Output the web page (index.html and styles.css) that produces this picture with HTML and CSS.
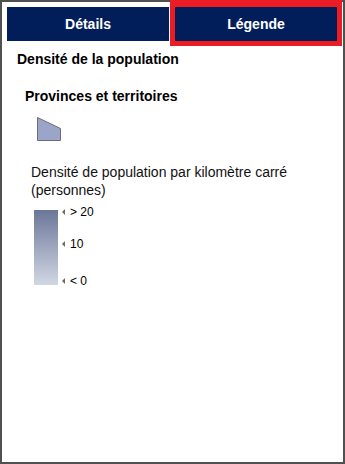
FILE: index.html
```html
<!DOCTYPE html>
<html lang="fr">
<head>
<meta charset="utf-8">
<link rel="stylesheet" href="styles.css">
</head>
<body>
<div class="frame">
  <div class="tabs">
    <div class="tab">Détails</div>
    <div class="tab active">Légende</div>
  </div>
  <div class="content">
    <h1 class="title">Densité de la population</h1>
    <div class="layer">
      <h2 class="layer-name">Provinces et territoires</h2>
      <svg class="swatch" width="24" height="24" viewBox="0 0 24 24">
        <polygon points="0.5,0.5 23.5,11.5 23.5,23.5 0.5,23.5" fill="#9aa5c9" stroke="#6e6e6e" stroke-width="1"/>
      </svg>
      <p class="desc">Densité de population par kilomètre carré (personnes)</p>
      <div class="scale">
        <div class="ramp"></div>
        <div class="ticks">
          <div class="tick t1"><span class="arrow"></span><span class="lbl">&gt; 20</span></div>
          <div class="tick t2"><span class="arrow"></span><span class="lbl">10</span></div>
          <div class="tick t3"><span class="arrow"></span><span class="lbl">&lt; 0</span></div>
        </div>
      </div>
    </div>
  </div>
</div>
</body>
</html>
```

FILE: styles.css
```css
html, body {
  margin: 0;
  padding: 0;
  background: #ffffff;
}
body {
  font-family: "Liberation Sans", Arial, sans-serif;
  color: #000;
}
.frame {
  width: 345px;
  height: 464px;
  box-sizing: border-box;
  border: 2px solid #505050;
  padding: 5px 6px 0 5px;
  background: #fff;
}
.tabs {
  display: flex;
  gap: 6px;
}
.tab {
  flex: 1;
  height: 34px;
  line-height: 34px;
  background: #021e5a;
  color: #fff;
  font-weight: bold;
  font-size: 14px;
  text-align: center;
}
.tab.active {
  box-shadow: 0 0 0 5px #ec1c24, 0 -2px 0 5px #ec1c24;
}
.content {
  padding-left: 10px;
}
.title {
  margin: 10px 0 0 0;
  font-size: 14px;
  line-height: 17px;
  font-weight: bold;
}
.layer {
  padding-left: 8px;
}
.layer-name {
  margin: 20px 0 0 0;
  font-size: 14px;
  line-height: 17px;
  font-weight: bold;
}
.swatch {
  display: block;
  margin: 12px 0 0 12px;
  width: 24px;
  height: 24px;
}
.desc {
  margin: 22px 0 0 6px;
  font-size: 14px;
  line-height: 18px;
  color: #111;
  width: 290px;
}
.scale {
  display: flex;
  margin: 11px 0 0 9px;
}
.ramp {
  width: 24px;
  height: 75px;
  background: linear-gradient(to bottom, #6b7799, #d2d7e3);
}
.ticks {
  display: flex;
  flex-direction: column;
  margin-left: 4px;
}
.tick {
  display: flex;
  align-items: center;
  height: 14px;
}
.t1 { margin-top: -5px; }
.t2 { margin-top: 18px; }
.t3 { margin-top: 23px; }
.arrow {
  width: 0;
  height: 0;
  border-right: 3px solid #6a6a6a;
  border-top: 3px solid transparent;
  border-bottom: 3px solid transparent;
}
.lbl {
  margin-left: 5px;
  font-size: 12px;
  line-height: 14px;
}
```
